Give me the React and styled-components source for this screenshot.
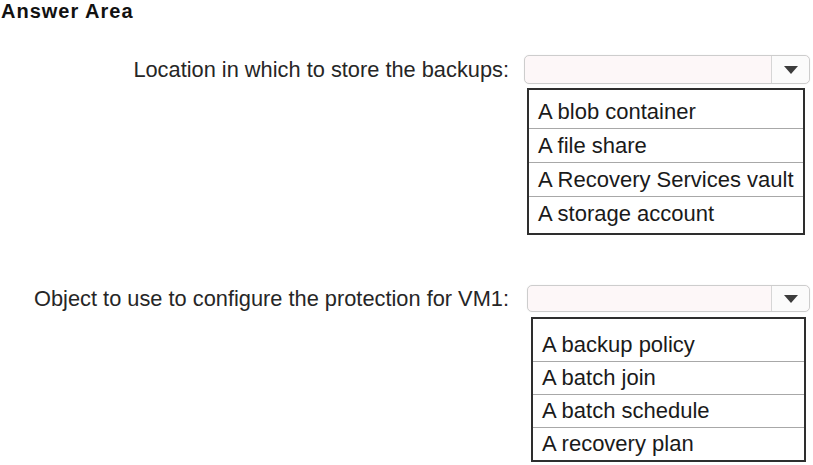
import React from 'react';
import styled, { createGlobalStyle } from 'styled-components';

const GlobalStyle = createGlobalStyle`
  html, body {
    margin: 0;
    padding: 0;
    background: #fff;
  }
  body {
    font-family: "Liberation Sans", Arial, sans-serif;
    color: #1e1e1e;
  }
`;

const Page = styled.div`
  width: 813px;
  height: 465px;
  box-sizing: border-box;
  padding: 0 3px 0 1px;
  overflow: hidden;
`;

const Heading = styled.h1`
  margin: 0;
  font-size: 20px;
  line-height: 22px;
  font-weight: 700;
  letter-spacing: 1px;
  color: #111;
`;

const Question = styled.div`
  display: grid;
  grid-template-columns: 1fr 286px;
  column-gap: 14px;
  margin-top: ${(p) => p.$top}px;
`;

const Label = styled.div`
  grid-column: 1;
  grid-row: 1;
  align-self: center;
  text-align: right;
  font-size: 21.8px;
  color: #262626;
  padding-right: 1px;
`;

const Select = styled.div`
  grid-column: 2;
  grid-row: 1;
  display: flex;
  height: ${(p) => p.$height}px;
  margin-left: ${(p) => p.$inset}px;
  box-sizing: border-box;
  border: 1px solid #cdcdcd;
  border-radius: 5px;
  background: #fdf7f8;
  box-shadow: 0 0 2px rgba(0, 0, 0, 0.06);
`;

const Field = styled.div`
  flex: 1;
`;

const ArrowButton = styled.div`
  width: 37px;
  display: flex;
  align-items: center;
  justify-content: center;
  border-left: 1px solid #d6d6d6;
  background: #fbfbfb;
  border-radius: 0 5px 5px 0;
`;

const Arrow = styled.span`
  width: 0;
  height: 0;
  border-left: 7px solid transparent;
  border-right: 7px solid transparent;
  border-top: 8px solid #3c3c3c;
`;

const Options = styled.ul`
  grid-column: 2;
  grid-row: 2;
  list-style: none;
  margin: ${(p) => p.$gap}px ${(p) => p.$right}px 0 ${(p) => p.$left}px;
  padding: ${(p) => p.$padTop}px 0 ${(p) => p.$padBottom}px;
  border: 2px solid #2e2e2e;
`;

const Option = styled.li`
  height: ${(p) => p.$height}px;
  display: flex;
  align-items: center;
  padding-left: 9px;
  font-size: 22px;
  color: #1a1a1a;
  border-bottom: 1px solid #a8a8a8;

  &:last-child {
    border-bottom: none;
  }
`;

const questions = [
  {
    label: 'Location in which to store the backups:',
    top: 33,
    select: { height: 29, inset: 0 },
    list: { gap: 4, left: 3, right: 5, padTop: 5, padBottom: 3, row: 33 },
    options: ['A blob container', 'A file share', 'A Recovery Services vault', 'A storage account'],
  },
  {
    label: 'Object to use to configure the protection for VM1:',
    top: 50,
    select: { height: 27, inset: 3 },
    list: { gap: 5, left: 7, right: 4, padTop: 10, padBottom: 0, row: 32 },
    options: ['A backup policy', 'A batch join', 'A batch schedule', 'A recovery plan'],
  },
];

export default function App() {
  return (
    <>
      <GlobalStyle />
      <Page>
        <Heading>Answer Area</Heading>
        {questions.map((q) => (
          <Question key={q.label} $top={q.top}>
            <Label>{q.label}</Label>
            <Select $height={q.select.height} $inset={q.select.inset}>
              <Field />
              <ArrowButton>
                <Arrow />
              </ArrowButton>
            </Select>
            <Options
              $gap={q.list.gap}
              $left={q.list.left}
              $right={q.list.right}
              $padTop={q.list.padTop}
              $padBottom={q.list.padBottom}
            >
              {q.options.map((o) => (
                <Option key={o} $height={q.list.row}>
                  {o}
                </Option>
              ))}
            </Options>
          </Question>
        ))}
      </Page>
    </>
  );
}
